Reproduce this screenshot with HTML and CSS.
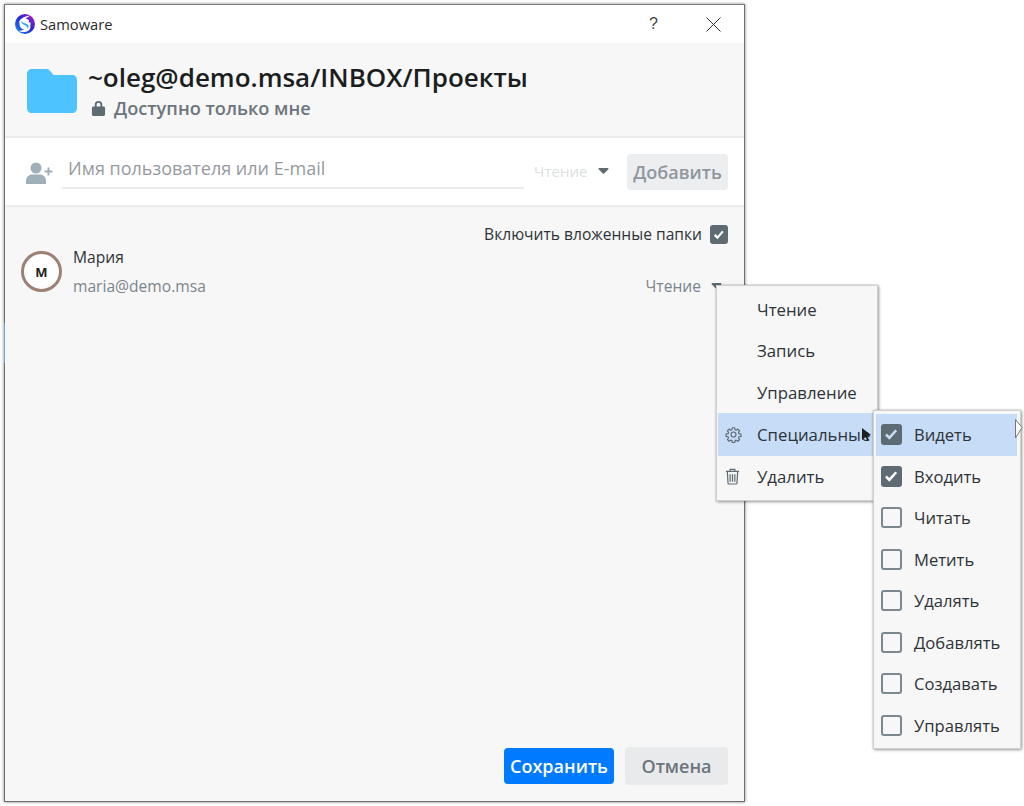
FILE: index.html
```html
<!DOCTYPE html>
<html lang="ru">
<head>
<meta charset="utf-8">
<title>Samoware</title>
<link rel="stylesheet" href="styles.css">
</head>
<body>
<main class="window">
  <div class="edge-accent"></div>
  <header class="titlebar">
    <div class="brand">
      <svg class="logo" viewBox="0 0 22 22" width="22" height="22">
        <defs>
          <linearGradient id="ring" x1="0" y1="1" x2="1" y2="0">
            <stop offset="0" stop-color="#1d7cf2"/>
            <stop offset=".55" stop-color="#2326d2"/>
            <stop offset="1" stop-color="#b11cc4"/>
          </linearGradient>
        </defs>
        <circle cx="11" cy="11" r="7.800" fill="#fff" stroke="url(#ring)" stroke-width="4.400"/>
        <path d="M16 2.500C10 3.500 4.500 6 5.500 10c.7 2.500 6 2.200 6 4.300 0 1.800-3 3.300-7 3.700 5.500 2.500 12 0.500 12-4.300 0-3-5.800-3.500-6.300-5.500-.3-1.400 2.300-3.300 5.800-5.700z" fill="#fff"/>
        <path d="M7.500 8C6.800 10.500 9.500 11.500 11.500 12.500c1.500.8 2.200 1.800 1.800 3.300 2-1.300 1.700-3.500-.2-4.600C11 10 8.500 10 7.500 8z" fill="#1fa8f5"/>
        <path d="M14.500 6c.7 1.500.7 3 .2 4.300 1.500-.9 1.900-3 1.200-4.600z" fill="#5a22d6"/>
      </svg>
      <span class="app-name">Samoware</span>
    </div>
    <div class="win-controls">
      <span class="help">?</span>
      <svg class="close" viewBox="0 0 15 15" width="15" height="15"><path d="M.5.500l14 14M14.500.500l-14 14" stroke="#333" stroke-width="1" fill="none"/></svg>
    </div>
  </header>

  <section class="folder-head">
    <svg class="folder" viewBox="0 0 50 44" width="50" height="44">
      <path d="M5 0h14c2 0 3 .6 4.200 2l3.400 4H45c3 0 5 2 5 5v28c0 3-2 5-5 5H5c-3 0-5-2-5-5V5c0-3 2-5 5-5z" fill="#4dc3ff"/>
    </svg>
    <div class="folder-text">
      <h1 class="folder-path">~oleg@demo.msa/INBOX/Проекты</h1>
      <div class="folder-access">
        <svg viewBox="0 0 16 17" width="15" height="16"><path d="M4 7V5a4 4 0 0 1 8 0v2h1.500c.8 0 1.500.7 1.500 1.500v7c0 .8-.7 1.500-1.500 1.500h-11C1.700 17 1 16.300 1 15.500v-7C1 7.700 1.700 7 2.500 7zm2 0h4V5a2 2 0 0 0-4 0z" fill="#5f6b73"/></svg>
        <span>Доступно только мне</span>
      </div>
    </div>
  </section>

  <section class="add-row">
    <svg class="add-user" viewBox="0 0 27 22" width="27" height="22"><circle cx="10" cy="6" r="5.500" fill="#9fb0bb"/><path d="M0 22v-3c0-4 3-6.500 6-6.500h8c3 0 6 2.500 6 6.500v3z" fill="#9fb0bb"/><path d="M22.500 5.500v8M18.500 9.500h8" stroke="#9fb0bb" stroke-width="2"/></svg>
    <div class="user-input">Имя пользователя или E-mail</div>
    <div class="role-select">
      <span>Чтение</span>
      <svg class="caret" viewBox="0 0 12 7" width="11" height="6"><path d="M1 0h10c.8 0 1.200.9.700 1.500L6.700 6.500c-.4.400-1 .4-1.400 0L.3 1.500C-.2.900.2 0 1 0z" fill="#5f6b73"/></svg>
    </div>
    <button class="btn btn-add">Добавить</button>
  </section>

  <section class="content">
    <label class="subfolders">
      <span>Включить вложенные папки</span>
      <span class="check on small"><svg viewBox="0 0 18 18"><path d="M3.500 9.500l3.500 3.500 7-8" fill="none" stroke="#fff" stroke-width="2.800"/></svg></span>
    </label>
    <div class="person">
      <div class="avatar">М</div>
      <div class="person-info">
        <div class="person-name">Мария</div>
        <div class="person-mail">maria@demo.msa</div>
      </div>
      <div class="person-role">
        <span>Чтение</span>
        <svg class="caret" viewBox="0 0 12 7" width="11" height="6"><path d="M1 0h10c.8 0 1.200.9.700 1.500L6.700 6.500c-.4.400-1 .4-1.400 0L.3 1.500C-.2.900.2 0 1 0z" fill="#5f6b73"/></svg>
      </div>
    </div>
  </section>

  <footer class="actions">
    <button class="btn btn-save">Сохранить</button>
    <button class="btn btn-cancel">Отмена</button>
  </footer>
</main>

<nav class="menu">
  <div class="menu-item"><span class="menu-icon"></span>Чтение</div>
  <div class="menu-item"><span class="menu-icon"></span>Запись</div>
  <div class="menu-item"><span class="menu-icon"></span>Управление</div>
  <div class="menu-item active">
    <span class="menu-icon">
      <svg viewBox="0 0 24 24" width="17" height="17"><path d="M10.300 2.500h3.400l.5 2.800 1.700.7 2.300-1.600 2.400 2.400-1.600 2.300.7 1.700 2.800.5v3.400l-2.800.5-.7 1.700 1.600 2.300-2.400 2.400-2.300-1.600-1.700.7-.5 2.800h-3.400l-.5-2.800-1.700-.7-2.300 1.600-2.400-2.400 1.600-2.300-.7-1.700-2.800-.5v-3.400l2.800-.5.7-1.700-1.600-2.300 2.400-2.400 2.300 1.600 1.700-.7z" fill="none" stroke="#5f6b73" stroke-width="1.700" stroke-linejoin="round"/><circle cx="12" cy="12" r="3.500" fill="none" stroke="#5f6b73" stroke-width="1.700"/></svg>
    </span>Специальные
    <svg class="sub-arrow" viewBox="0 0 9 13" width="9" height="13"><path d="M0 0l9 7-4 1 2 4-1.500 1-2-4L0 12z" fill="#1c1f22"/></svg>
  </div>
  <div class="menu-item">
    <span class="menu-icon">
      <svg viewBox="0 0 16 18" width="15" height="17"><path d="M1 3.500h14M5.500 3.500V1.500h5v2M2.500 3.500l.7 12.500c0 .6.500 1 1 1h7.600c.5 0 1-.4 1-1l.7-12.500M5.500 6.500v8M8 6.500v8M10.500 6.500v8" fill="none" stroke="#5f6b73" stroke-width="1.300"/></svg>
    </span>Удалить
  </div>
</nav>

<nav class="submenu">
  <div class="sub-item active"><span class="check on"><svg viewBox="0 0 20 20"><path d="M3.500 10l4 4 8-9" fill="none" stroke="#c6dcf7" stroke-width="3"/></svg></span>Видеть</div>
  <div class="sub-item"><span class="check on"><svg viewBox="0 0 20 20"><path d="M3.500 10l4 4 8-9" fill="none" stroke="#fff" stroke-width="3"/></svg></span>Входить</div>
  <div class="sub-item"><span class="check"></span>Читать</div>
  <div class="sub-item"><span class="check"></span>Метить</div>
  <div class="sub-item"><span class="check"></span>Удалять</div>
  <div class="sub-item"><span class="check"></span>Добавлять</div>
  <div class="sub-item"><span class="check"></span>Создавать</div>
  <div class="sub-item"><span class="check"></span>Управлять</div>
</nav>
<svg class="cursor" viewBox="0 0 8 20" width="8" height="20"><path d="M.5.500L7 8.500 .5 19z" fill="#fff" stroke="#777" stroke-width="1"/></svg>
</body>
</html>
```
FILE: styles.css
```css
* { box-sizing: border-box; }
html, body { margin: 0; height: 100%; background: #fff; overflow: hidden; }
body { font-family: "Open Sans", "Noto Sans", sans-serif; color: #24292d; position: relative; width: 1024px; height: 806px; }

.window {
  position: absolute; left: 4px; top: 4px; width: 741px; height: 798px;
  border: 1px solid #6e6e6e; border-top-color: #7c7c7c;
  box-shadow: 0 0 3px rgba(0,0,0,.5);
  background: #f7f7f7; display: flex; flex-direction: column;
}
.edge-accent { position: absolute; left: -1px; top: 318px; width: 1px; height: 40px; background: #6fa6dc; }
.titlebar { height: 38px; background: #fff; display: flex; align-items: center; justify-content: space-between; padding: 0 23px 0 9px; flex: none; }
.brand { display: flex; align-items: center; gap: 4px; }
.logo { display: block; }
.app-name { font-size: 14.700px; color: #2b2b2b; }
.win-controls { display: flex; align-items: center; gap: 48px; }
.help { font-size: 16px; color: #444; font-family: "Liberation Sans", sans-serif; }
.close { display: block; }

.folder-head { height: 95px; flex: none; display: flex; align-items: center; gap: 11px; padding: 0 0 0 22px; border-bottom: 2px solid #ececec; background: #f7f7f7; }
.folder { display: block; flex: none; margin-top: 2px; }
.folder-text { display: flex; flex-direction: column; margin-top: 2px; }
.folder-path { margin: 0; font-size: 26px; font-weight: 600; line-height: 32px; color: #1b1e21; }
.folder-access { display: flex; align-items: center; gap: 8px; font-size: 18.200px; font-weight: 600; color: #6c757d; line-height: 26px; padding-left: 3px; margin-top: 2px; }
.folder-access svg { display: block; }

.add-row { height: 69px; flex: none; background: #fff; display: flex; align-items: center; border-bottom: 2px solid #ececec; padding: 0 16px 0 21px; }
.add-user { display: block; flex: none; margin-top: 2px; }
.user-input { width: 462px; margin-left: 9px; height: 38px; line-height: 35px; padding-left: 6px; border-bottom: 2px solid #ececec; font-size: 18px; color: #959a9f; margin-top: -3px; flex: none; }
.role-select { display: flex; align-items: center; gap: 11px; margin-left: 10px; margin-top: -2px; font-size: 15px; color: #dcdfe2; width: 93px; flex: none; }
.caret { display: block; flex: none; }
.btn { font-family: inherit; font-weight: 600; border: 0; border-radius: 4px; padding: 0; font-size: 18px; }
.btn-add { width: 101px; height: 36px; background: #eceeef; color: #8f979d; }

.content { flex: 1; padding: 17px 16px 0 16px; position: relative; }
.subfolders { display: flex; justify-content: flex-end; align-items: center; gap: 8px; font-size: 15.600px; color: #2e3338; height: 20px; line-height: 20px; }
.check { display: block; width: 21px; height: 21px; border: 2px solid #7c8890; border-radius: 3px; flex: none; }
.check.on { background: #5f6b73; border-color: #5f6b73; padding: 0; }
.check svg { display: block; width: 17px; height: 17px; }
.check.small { width: 18px; height: 19px; }
.check.small svg { width: 14px; height: 15px; }
.person { display: flex; align-items: flex-start; margin-top: 2px; }
.avatar { width: 41px; height: 41px; border-radius: 50%; border: 3px solid #9c8175; background: #fff; font-size: 13px; font-weight: 700; display: flex; align-items: center; justify-content: center; color: #222; margin-top: 5px; flex: none; }
.person-info { margin-left: 11px; }
.person-name { font-size: 15.600px; line-height: 22px; color: #2e3338; }
.person-mail { font-size: 15.600px; line-height: 22px; color: #7b858d; margin-top: 7px; }
.person-role { margin-left: auto; margin-right: 6px; display: flex; align-items: center; gap: 10px; font-size: 15.600px; color: #7b858d; line-height: 22px; margin-top: 29px; }

.actions { flex: none; display: flex; justify-content: flex-end; align-items: center; gap: 11px; padding: 0 16px 16px 0; }
.btn-save { width: 110px; height: 36px; background: #007bff; color: #fff; }
.btn-cancel { width: 103px; height: 38px; background: #e9eaeb; color: #6c757d; }

.menu, .submenu { position: absolute; background: #f7f7f7; border: 1px solid #d0d0d0; box-shadow: 1px 1px 3px rgba(0,0,0,.35), 0 0 2px rgba(0,0,0,.2); }
.menu { left: 716px; top: 285px; width: 162px; height: 216px; padding-top: 2.500px; }
.menu-item { height: 41.500px; display: flex; align-items: center; font-size: 16.800px; color: #2e3338; margin-left: 1px; position: relative; white-space: nowrap; }
.menu-item.active { background: #c6dcf7; height: 43px; margin-right: 3px; }
.menu-icon { width: 39px; padding-left: 7px; flex: none; display: flex; align-items: center; }
.menu-icon svg { display: block; }
.sub-arrow { position: absolute; left: 144px; top: 15px; }

.submenu { left: 873px; top: 410px; width: 148px; height: 339px; padding: 3px 3px 0 2px; }
.sub-item { height: 41.500px; display: flex; align-items: center; gap: 12px; font-size: 16.600px; color: #2e3338; padding-left: 5px; white-space: nowrap; }
.sub-item.active { background: #c6dcf7; }
.cursor { position: absolute; left: 1015px; top: 419px; display: block; }
```
